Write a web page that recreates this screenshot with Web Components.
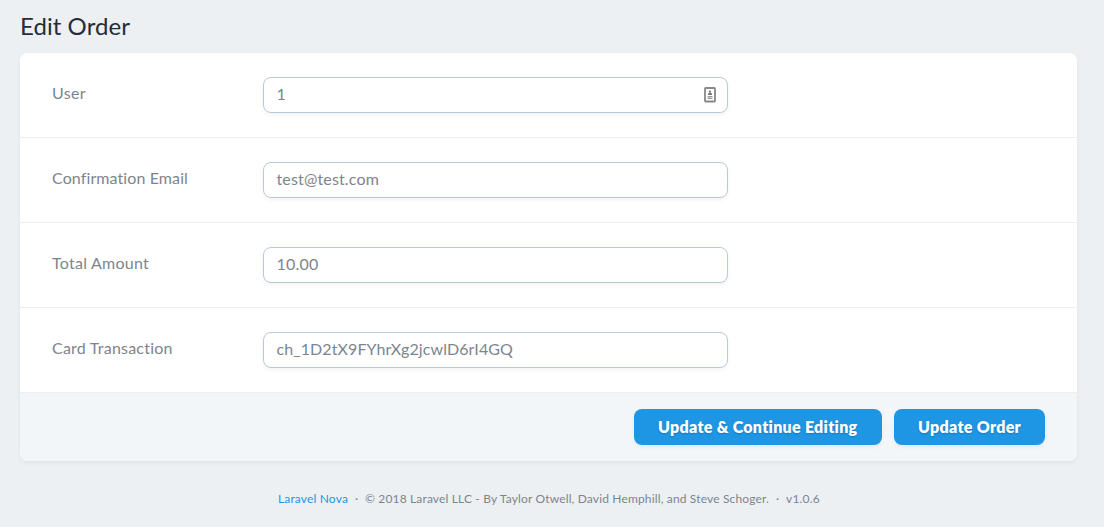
<!DOCTYPE html>
<html lang="en">
<head>
<meta charset="utf-8">
<title>Edit Order</title>
<style>
html,body{margin:0;height:100%;background:#ecf0f3;overflow:hidden}
body{font-family:Lato,"Noto Sans",sans-serif;font-size:16px;color:#7c858e;-webkit-font-smoothing:antialiased}
</style>
</head>
<body>
<nova-page>
  <nova-card>
    <nova-field label="User" lw="34" value="1" vw="9"><contact-icon></contact-icon></nova-field>
    <nova-field label="Confirmation Email" lw="136" value="test@test.com" vw="102.5"></nova-field>
    <nova-field label="Total Amount" lw="97" value="10.00" vw="42"></nova-field>
    <nova-field label="Card Transaction" lw="121" value="ch_1D2tX9FYhrXg2jcwlD6rI4GQ" vw="236.5"></nova-field>
    <nova-button slot="actions"><fit-text w="200">Update &amp; Continue Editing</fit-text></nova-button>
    <nova-button slot="actions"><fit-text w="103">Update Order</fit-text></nova-button>
  </nova-card>
</nova-page>
<script>
// Text whose tracking is adjusted to fill a given width.
class FitText extends HTMLElement {
  connectedCallback() {
    const root = this.attachShadow({mode: 'open'});
    root.innerHTML = `<style>:host{display:inline-block;white-space:nowrap}span{display:inline-block;white-space:pre}</style><span><slot></slot></span>`;
    const w = +this.getAttribute('w');
    const n = this.textContent.length;
    const span = root.querySelector('span');
    span.style.letterSpacing = ((w - span.getBoundingClientRect().width) / n) + 'px';
    this.style.width = w + 'px';
  }
}
class ContactIcon extends HTMLElement {
  constructor() {
    super();
    this.attachShadow({mode: 'open'}).innerHTML = `<style>:host{display:block;width:12px;height:16px}svg{display:block}</style>
    <svg width="12" height="16" viewBox="0 0 12 16"><rect x="1" y="1" width="10" height="13.5" rx=".7" fill="#fff" stroke="#888" stroke-width="1.8"/><circle cx="6" cy="4.5" r="1.1" fill="#777"/><path d="M4 8V6.8L5.1 5.5h1.8L8 6.8V8z" fill="#777"/><path d="M3.5 9.5h5M3.5 11.5h5" stroke="#999"/><path d="M3.5 10.5h5" stroke="#ccc"/></svg>`;
  }
}
class NovaField extends HTMLElement {
  connectedCallback() {
    const a = n => this.getAttribute(n);
    this.attachShadow({mode: 'open'}).innerHTML = `<style>
    :host{display:flex;height:84px;border-bottom:1px solid #eceff1;background:#fff}
    .label{box-sizing:border-box;width:211px;padding:28px 0 0 32px;line-height:24px}
    .wrap{padding:24px 32px}
    .input{box-sizing:border-box;width:465px;height:36px;border:1px solid #b7cad8;border-radius:8px;padding:0 11px 0 12.5px;display:flex;align-items:center;justify-content:space-between;box-shadow:0 2px 4px rgba(0,0,0,.05);line-height:32px;background:#fff}
    .input fit-text{height:34px}
    </style><div class="label"><fit-text w="${a('lw')}">${a('label')}</fit-text></div>
    <div class="wrap"><div class="input"><fit-text w="${a('vw')}">${a('value')}</fit-text><slot></slot></div></div>`;
  }
}
class NovaButton extends HTMLElement {
  constructor() {
    super();
    this.attachShadow({mode: 'open'}).innerHTML = `<style>
    :host{display:block;height:36px;line-height:36px;padding:0 24px;border-radius:8px;background:#1f96e4;color:#fff;font-weight:800;text-shadow:0 1px 2px rgba(0,0,0,.2);box-shadow:0 2px 4px rgba(0,0,0,.05)}
    </style><slot></slot>`;
  }
}
class NovaCard extends HTMLElement {
  constructor() {
    super();
    this.attachShadow({mode: 'open'}).innerHTML = `<style>
    :host{display:block;width:1057px;border-radius:8px;background:#fff;box-shadow:0 2px 4px rgba(0,0,0,.05)}
    .body{border-radius:8px 8px 0 0;overflow:hidden}
    .actions{display:flex;justify-content:flex-end;gap:12px;padding:16px 32px;background:#f3f6f9;border-radius:0 0 8px 8px}
    </style><div class="body"><slot></slot></div><div class="actions"><slot name="actions"></slot></div>`;
  }
}
class NovaPage extends HTMLElement {
  constructor() {
    super();
    this.attachShadow({mode: 'open'}).innerHTML = `<style>
    :host{display:block;padding:0 20px}
    h1{margin:0;height:53px;box-sizing:border-box;padding-top:11px;font-size:24px;line-height:30px;font-weight:400;color:#252d37}
    footer{display:flex;width:1058px;justify-content:center;padding-top:29px;font-size:12px;line-height:18px}
    a{color:#1f96e4}
    i{font-style:normal;width:17px;text-align:center}
    </style><h1><fit-text w="110">Edit Order</fit-text></h1><slot></slot>
    <footer><a><fit-text w="70">Laravel Nova</fit-text></a><i>·</i><fit-text w="404">© 2018 Laravel LLC - By Taylor Otwell, David Hemphill, and Steve Schoger.</fit-text><i>·</i><fit-text w="34">v1.0.6</fit-text></footer>`;
  }
}
// Containers come first so that text is measured with its inherited styles.
customElements.define('nova-page', NovaPage);
customElements.define('nova-card', NovaCard);
customElements.define('nova-field', NovaField);
customElements.define('nova-button', NovaButton);
customElements.define('contact-icon', ContactIcon);
customElements.define('fit-text', FitText);
</script>
</body>
</html>
